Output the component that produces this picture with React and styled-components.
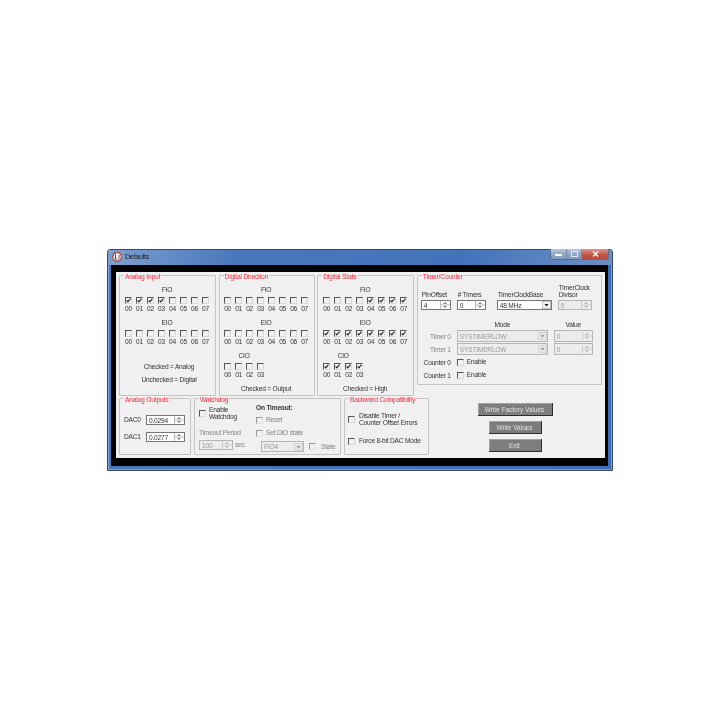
import React from "react";
import styled, { createGlobalStyle } from "styled-components";

const Global = createGlobalStyle`
  html, body { margin: 0; padding: 0; background: #fff; }
  body { font-family: "Liberation Sans", Arial, sans-serif; font-size: 6.6px; letter-spacing: -.2px; color: #333; }
`;
const Stage = styled.div`
  width: 720px; height: 720px; padding: 249px 0 0 107px; box-sizing: border-box;
`;
const Win = styled.div`
  width: 506px; height: 222px; box-sizing: border-box;
  display: flex; flex-direction: column;
  border: 1px solid #3a4a60; border-radius: 3px 3px 0 0;
  background: linear-gradient(90deg, #4a7abd 0%, #3f72ba 50%, #3a6fb8 100%);
  box-shadow: inset 0 0 0 1px rgba(190,215,245,.45);
  filter: blur(.3px);
`;
const TitleBar = styled.div`
  height: 15px; flex: none; display: flex; align-items: center; position: relative;
  padding: 0 0 2px 4px; box-sizing: border-box; gap: 3px;
  background: linear-gradient(90deg, #7d9fcf 0%, #4a78bc 25%, #4373ba 70%, #6b8fc4 100%);
`;
const TitleText = styled.span`
  font-size: 7px; color: #1a1a24;
`;
const WinButtons = styled.div`
  position: absolute; right: 3px; top: -1px; height: 10px; display: flex;
  border: 1px solid #5a6f90; border-top: 0; border-radius: 0 0 3px 3px; overflow: hidden;
`;
const WinBtn = styled.div`
  width: ${p => p.$w}px; display: flex; align-items: center; justify-content: center;
  background: ${p => p.$close
    ? "linear-gradient(#d9998e, #c5574a 55%, #b9483c)"
    : "linear-gradient(#bccadd, #93a9c7 50%, #8199bb)"};
  border-left: ${p => p.$first ? "0" : "1px solid #6f86a8"};
`;
const Frame = styled.div`
  flex: 1; margin: 0 4px 4px 3px; background: #000; padding: 7px 3px 8px 5px; display: flex;
`;
const Client = styled.div`
  flex: 1; background: #f0f0f0; padding: 3px 3px 0 3px; display: flex; flex-direction: column; gap: 2px;
`;
const Row = styled.div`
  display: flex; align-items: flex-start; gap: ${p => p.$gap ?? 3}px;
`;
const Group = styled.div`
  position: relative; box-sizing: border-box;
  width: ${p => p.$w}px; height: ${p => p.$h}px; flex: none;
  border: 1px solid #c4c4c4; border-radius: 1px;
  padding: ${p => p.$pad || "10px 0 0 5px"};
`;
const Legend = styled.span`
  position: absolute; left: 4px; top: -3px; height: 8px; line-height: 8px;
  background: #f0f0f0; padding: 0 1px; color: #fb2a3c; font-size: 6.7px; white-space: nowrap;
`;
const Block = styled.div`
  width: fit-content; margin-bottom: 6px;
`;
const Title = styled.div`
  height: 8px; line-height: 8px; text-align: center; color: #333; margin-bottom: 3px;
`;
const Bits = styled.div`
  display: grid; grid-template-columns: repeat(${p => p.$n}, 7px); column-gap: 4px; row-gap: 1px;
`;
const BitLabel = styled.span`
  width: 7px; height: 8px; line-height: 8px; display: flex; justify-content: center;
  color: #333; white-space: nowrap;
`;
const Box = styled.span`
  width: 7px; height: 7px; box-sizing: border-box; flex: none; display: block;
  border-style: solid; border-width: 1px;
  border-color: ${p => p.$off ? "#999 #e2e2e2 #e2e2e2 #999" : "#555 #d8d8d8 #d8d8d8 #555"};
  background: ${p => p.$on ? "#f4f4f4" : "transparent"};
  & svg { display: block; width: 5px; height: 5px; }
`;
const Note = styled.div`
  width: ${p => p.$w || 84}px; height: 8px; line-height: 8px; white-space: nowrap;
  color: #333; margin-top: ${p => p.$mt}px;
  display: flex; justify-content: center;
`;
const Spin = styled.div`
  box-sizing: border-box; flex: none; display: flex; align-items: center;
  width: ${p => p.$w}px; height: ${p => p.$h || 10}px;
  border: 1px solid ${p => p.$off ? "#b5b5b5" : "#777"};
  background: ${p => p.$off ? "#ececec" : "#fff"};
  color: ${p => p.$off ? "#9a9a9a" : "#333"};
  padding-left: 2px; justify-content: space-between;
  & svg { display: block; flex: none; }
`;
const Label = styled.span`
  height: 8px; line-height: 8px; white-space: nowrap;
  color: ${p => p.$off ? "#828282" : "#333"};
  font-weight: ${p => p.$bold ? 700 : 400};
`;
const Field = styled.div`
  width: ${p => p.$w}px; display: flex; flex-direction: column; gap: 2px; flex: none;
`;
const TwoLine = styled.span`
  display: block; line-height: 7px; color: #333; padding-left: 1px; white-space: nowrap;
`;
const TimerTop = styled.div`
  display: flex; align-items: flex-end; height: 26px;
`;
const TimerGrid = styled.div`
  display: grid; grid-template-columns: 30px 91px 39px; column-gap: 6px;
  grid-auto-rows: 12px; row-gap: 1px; align-items: center; margin-top: 7px;
`;
const HeadCell = styled.div`
  text-align: center; color: #333; grid-column: ${p => p.$col};
  margin-top: 2px;
`;
const RightLabel = styled.div`
  white-space: nowrap; color: ${p => p.$off ? "#828282" : "#333"};
  display: flex; justify-content: flex-end;
`;
const CheckLine = styled.div`
  display: flex; align-items: center; gap: ${p => p.$gap ?? 3}px; margin-top: ${p => p.$mt || 0}px; margin-left: ${p => p.$ml || 0}px;
`;
const DacRow = styled.div`
  display: flex; align-items: center; margin-bottom: 7px;
  & > span { width: 22px; }
`;
const Column = styled.div`
  flex: none; width: ${p => p.$w}px; padding-top: ${p => p.$pt}px; display: flex; flex-direction: column;
`;
const Actions = styled.div`
  flex: 1; display: flex; flex-direction: column; align-items: center; padding: 5px 4px 0 0;
  gap: 5px;
`;
const Btn = styled.button`
  box-sizing: border-box; width: ${p => p.$w}px; height: 13px; padding: 0; margin: 0;
  font-family: inherit; font-size: 6.5px; color: #e2e2e2;
  background: #7d7d7d; border: 0; border-right: 1px solid #2e2e2e; border-bottom: 1px solid #2e2e2e;
  box-shadow: inset 1px 1px 0 #a5a5a5;
`;

const Tick = () => (
  <svg viewBox="0 0 5 5"><path d="M.6 2.4 L1.9 3.9 L4.4 .7" fill="none" stroke="#222" strokeWidth="1.1" /></svg>
);
const Check = ({ on, off }) => <Box $on={on} $off={off}>{on ? <Tick /> : null}</Box>;

const Arrows = ({ off }) => {
  const c = off ? "#a8a8a8" : "#555";
  return (
    <svg width="10" height="8" viewBox="0 0 10 8">
      <path d="M.5 0V8M.5 4H10" stroke={off ? "#cfcfcf" : "#bbb"} strokeWidth="1" fill="none" />
      <path d={"M3 2.8H7L5 1.2Z M3 5.2H7L5 6.8Z"} fill={c} />
    </svg>
  );
};
const Spinner = ({ w, h, off, children }) => (
  <Spin $w={w} $h={h} $off={off}><span>{children}</span><Arrows off={off} /></Spin>
);
const DropArrow = ({ off }) => (
  <svg width="9" height="8" viewBox="0 0 9 8">
    <rect x="0" y="0" width="9" height="8" fill={off ? "#e4e4e4" : "#f2f2f2"} stroke={off ? "#c6c6c6" : "#999"} />
    <path d="M2.5 3H6.5L4.5 5.5Z" fill={off ? "#999" : "#111"} />
  </svg>
);
const Select = ({ w, h, off, children }) => (
  <Spin $w={w} $h={h} $off={off}><span>{children}</span><DropArrow off={off} /></Spin>
);

const codes = ["00", "01", "02", "03", "04", "05", "06", "07"];
const BitBlock = ({ title, values }) => (
  <Block>
    <Title>{title}</Title>
    <Bits $n={values.length}>
      {values.map((v, i) => <Check key={"c" + i} on={!!v} />)}
      {values.map((v, i) => <BitLabel key={"l" + i}>{codes[i]}</BitLabel>)}
    </Bits>
  </Block>
);

const AppIcon = () => (
  <svg width="10" height="10" viewBox="0 0 10 10">
    <circle cx="5" cy="5" r="4.3" fill="#fff" stroke="#b8392e" strokeWidth="1.2" />
    <path d="M3.4 2.4V7H5" stroke="#333" strokeWidth="1" fill="none" />
    <path d="M7 3V6.6Q7 8 5.6 8" stroke="#555" strokeWidth="1" fill="none" />
  </svg>
);

export default function App() {
  return (
    <Stage>
      <Global />
      <Win>
        <TitleBar>
          <AppIcon />
          <TitleText>Defaults</TitleText>
          <WinButtons>
            <WinBtn $w={15} $first>
              <svg width="7" height="3" viewBox="0 0 7 3"><rect x="0" y="1" width="7" height="2" fill="#fff" /></svg>
            </WinBtn>
            <WinBtn $w={14}>
              <svg width="7" height="6" viewBox="0 0 7 6"><rect x=".5" y=".5" width="6" height="5" fill="none" stroke="#dfe8f3" /></svg>
            </WinBtn>
            <WinBtn $w={26} $close>
              <svg width="7" height="6" viewBox="0 0 7 6"><path d="M1 .5 L6 5.5 M6 .5 L1 5.5" stroke="#fff" strokeWidth="1.4" /></svg>
            </WinBtn>
          </WinButtons>
        </TitleBar>
        <Frame>
          <Client>
            <Row $gap={2.6}>
              <Group $w={97} $h={121}>
                <Legend>Analog Input</Legend>
                <BitBlock title="FIO" values={[1, 1, 1, 1, 0, 0, 0, 0]} />
                <BitBlock title="EIO" values={[0, 0, 0, 0, 0, 0, 0, 0]} />
                <Note $mt={17} $w={88}>Checked = Analog</Note>
                <Note $mt={5} $w={88}>Unchecked = Digital</Note>
              </Group>
              <Group $w={96} $h={121} $pad="10px 0 0 4.5px">
                <Legend>Digital Direction</Legend>
                <BitBlock title="FIO" values={[0, 0, 0, 0, 0, 0, 0, 0]} />
                <BitBlock title="EIO" values={[0, 0, 0, 0, 0, 0, 0, 0]} />
                <BitBlock title="CIO" values={[0, 0, 0, 0]} />
                <Note $mt={0}>Checked = Output</Note>
              </Group>
              <Group $w={97} $h={121}>
                <Legend>Digital State</Legend>
                <BitBlock title="FIO" values={[0, 0, 0, 0, 1, 1, 1, 1]} />
                <BitBlock title="EIO" values={[1, 1, 1, 1, 1, 1, 1, 1]} />
                <BitBlock title="CIO" values={[1, 1, 1, 1]} />
                <Note $mt={0}>Checked = High</Note>
              </Group>
              <Group $w={185} $h={110} $pad="8px 0 0 3px">
                <Legend>Timer/Counter</Legend>
                <TimerTop>
                  <Field $w={36}>
                    <TwoLine>PinOffset</TwoLine>
                    <Spinner w={30}>4</Spinner>
                  </Field>
                  <Field $w={40}>
                    <TwoLine>&#35; Timers</TwoLine>
                    <Spinner w={29}>0</Spinner>
                  </Field>
                  <Field $w={61}>
                    <TwoLine>TimerClockBase</TwoLine>
                    <Select w={55}>48 MHz</Select>
                  </Field>
                  <Field $w={34}>
                    <TwoLine>TimerClock<br />Divisor</TwoLine>
                    <Spinner w={34} off>0</Spinner>
                  </Field>
                </TimerTop>
                <TimerGrid>
                  <HeadCell $col="2">Mode</HeadCell>
                  <HeadCell $col="3">Value</HeadCell>
                  <RightLabel $off>Timer 0</RightLabel>
                  <Select w={91} h={12} off>SYSTIMERLOW</Select>
                  <Spinner w={39} h={12} off>0</Spinner>
                  <RightLabel $off>Timer 1</RightLabel>
                  <Select w={91} h={12} off>SYSTIMERLOW</Select>
                  <Spinner w={39} h={12} off>0</Spinner>
                  <RightLabel>Counter 0</RightLabel>
                  <CheckLine><Check /><Label>Enable</Label></CheckLine>
                  <span />
                  <RightLabel>Counter 1</RightLabel>
                  <CheckLine><Check /><Label>Enable</Label></CheckLine>
                </TimerGrid>
              </Group>
            </Row>
            <Row>
              <Group $w={72} $h={57} $pad="16px 0 0 4px">
                <Legend>Analog Outputs</Legend>
                <DacRow><Label>DAC0</Label><Spinner w={39}>0.0294</Spinner></DacRow>
                <DacRow><Label>DAC1</Label><Spinner w={39}>0.0277</Spinner></DacRow>
              </Group>
              <Group $w={147} $h={57} $pad="0 0 0 4px">
                <Legend>Watchdog</Legend>
                <Row $gap={0}>
                  <Column $w={57} $pt={7}>
                    <CheckLine $gap={2}>
                      <Check />
                      <TwoLine>Enable<br />Watchdog</TwoLine>
                    </CheckLine>
                    <CheckLine $mt={9}><Label $off>Timeout Period</Label></CheckLine>
                    <CheckLine $mt={3} $gap={2}>
                      <Spinner w={34} off>100</Spinner>
                      <Label $off>sec.</Label>
                    </CheckLine>
                  </Column>
                  <Column $w={84} $pt={5}>
                    <Label $bold>On Timeout:</Label>
                    <CheckLine $mt={4}><Check off /><Label $off>Reset</Label></CheckLine>
                    <CheckLine $mt={5}><Check off /><Label $off>Set DIO state</Label></CheckLine>
                    <CheckLine $mt={4} $ml={5} $gap={5}>
                      <Select w={43} h={11} off>FIO4</Select>
                      <Check off />
                      <Label $off>State</Label>
                    </CheckLine>
                  </Column>
                </Row>
              </Group>
              <Group $w={85} $h={57} $pad="13px 0 0 3px">
                <Legend>Backward Compatibility</Legend>
                <CheckLine>
                  <Check />
                  <TwoLine>Disable Timer /<br />Counter Offset Errors</TwoLine>
                </CheckLine>
                <CheckLine $gap={4} $mt={11}>
                  <Check />
                  <Label>Force 8-bit DAC Mode</Label>
                </CheckLine>
              </Group>
              <Actions>
                <Btn $w={75}>Write Factory Values</Btn>
                <Btn $w={53}>Write Values</Btn>
                <Btn $w={53}>Exit</Btn>
              </Actions>
            </Row>
          </Client>
        </Frame>
      </Win>
    </Stage>
  );
}
